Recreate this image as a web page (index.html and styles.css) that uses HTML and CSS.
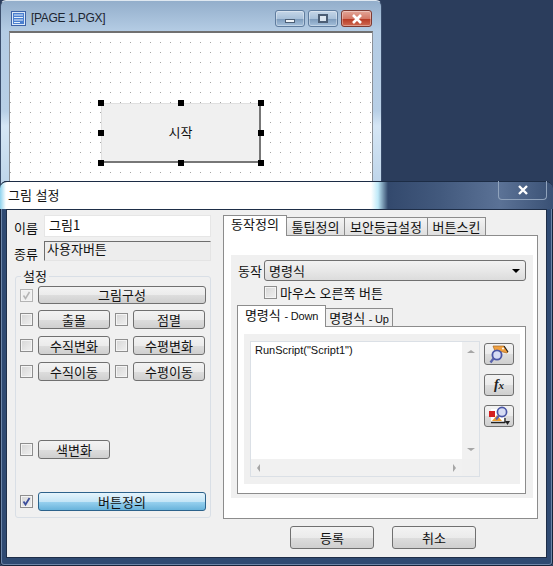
FILE: index.html
```html
<!DOCTYPE html>
<html lang="ko">
<head>
  <meta charset="UTF-8">
  <meta name="viewport" content="width=device-width, initial-scale=1.0">
  <title>그림 설정</title>
  <link rel="stylesheet" href="styles.css">
</head>
<body>

<!-- page window behind the dialog -->
<div class="page-win">
  <div class="page-title">
    <svg class="page-icon" width="15" height="15" viewBox="0 0 15 15">
      <rect x="0.5" y="0.5" width="14" height="14" fill="#dce9f8" stroke="#3c62a8"/>
      <rect x="2" y="2" width="11" height="11" fill="#4a7fd0"/>
      <path d="M3 4h9M3 6.5h9M3 9h9M3 11.5h6" stroke="#e6f0fb" stroke-width="1"/>
    </svg>
    <span class="page-name">[PAGE 1.PGX]</span>
    <div class="win-btns">
      <div class="win-btn"><span class="glyph-min"></span></div>
      <div class="win-btn"><span class="glyph-max"></span></div>
      <div class="win-btn win-close">
        <svg width="14" height="10" viewBox="0 0 14 10"><path d="M3 1l8 8M11 1l-8 8" stroke="#fff" stroke-width="2.6"/></svg>
      </div>
    </div>
  </div>
  <div class="canvas">
    <div class="shape">
      시작
      <i class="handle h-tl"></i><i class="handle h-tc"></i><i class="handle h-tr"></i>
      <i class="handle h-ml"></i><i class="handle h-mr"></i>
      <i class="handle h-bl"></i><i class="handle h-bc"></i><i class="handle h-br"></i>
    </div>
  </div>
</div>

<!-- settings dialog -->
<div class="dialog">
  <div class="dialog-title">
    <span>그림 설정</span>
    <div class="dialog-close">
      <svg width="14" height="10" viewBox="0 0 14 10"><path d="M3 1l8 8M11 1l-8 8" stroke="#fff" stroke-width="2.4"/></svg>
    </div>
  </div>

  <div class="client">
    <div class="left-col">
      <div class="field">
        <label>이름</label>
        <div class="name-input">그림1</div>
      </div>
      <div class="field field-kind">
        <label>종류</label>
        <div class="kind-input">사용자버튼</div>
      </div>

      <fieldset class="group">
        <legend>설정</legend>
        <div class="row row-first">
          <span class="check check-off"><svg width="11" height="11" viewBox="0 0 11 11"><path d="M2.5 5.5l2 3 4-6.5" fill="none" stroke="#b4b4b4" stroke-width="1.5"/></svg></span>
          <button class="btn btn-wide">그림구성</button>
        </div>
        <div class="row">
          <span class="check"></span><button class="btn btn-half">출몰</button>
          <span class="check check-second"></span><button class="btn btn-half">점멸</button>
        </div>
        <div class="row">
          <span class="check"></span><button class="btn btn-half">수직변화</button>
          <span class="check check-second"></span><button class="btn btn-half">수평변화</button>
        </div>
        <div class="row">
          <span class="check"></span><button class="btn btn-half">수직이동</button>
          <span class="check check-second"></span><button class="btn btn-half">수평이동</button>
        </div>
        <div class="row row-color">
          <span class="check"></span><button class="btn btn-half">색변화</button>
        </div>
        <div class="row row-define">
          <span class="check"><svg width="11" height="11" viewBox="0 0 11 11"><path d="M2.5 5.5l2 3 4-6.5" fill="none" stroke="#3d4f9c" stroke-width="1.8"/></svg></span>
          <button class="btn btn-wide btn-blue">버튼정의</button>
        </div>
      </fieldset>
    </div>

    <div class="right-col">
      <div class="tabs">
        <div class="tab tab-on">동작정의</div>
        <div class="tab tab-tooltip">툴팁정의</div>
        <div class="tab tab-security">보안등급설정</div>
        <div class="tab tab-skin">버튼스킨</div>
      </div>
      <div class="tab-panel">
        <div class="action-area">
          <div class="action-row">
            <label>동작</label>
            <div class="combo"><span>명령식</span><i class="combo-arrow"></i></div>
          </div>
          <div class="mouse-row">
            <span class="check"></span>
            <span>마우스 오른쪽 버튼</span>
          </div>
          <div class="subtabs">
            <div class="subtab subtab-on">명령식 <small>- Down</small></div>
            <div class="subtab subtab-up">명령식 <small>- Up</small></div>
          </div>
          <div class="subpanel">
            <div class="script-area">
              <div class="script-box">
                <div class="script-text">RunScript("Script1")</div>
                <div class="vscroll"><i class="arrow-up"></i><i class="arrow-down"></i></div>
                <div class="hscroll"><i class="arrow-left"></i><i class="arrow-right"></i></div>
                <div class="corner"></div>
              </div>
              <div class="tool-col">
                <button class="tool">
                  <svg width="22" height="19" viewBox="0 0 22 19">
                    <path d="M5 1h11l4 6-1 1-4-1-4-1H7z" fill="#f0a040" stroke="#a8651c" stroke-width="0.7"/>
                    <path d="M16 1l4 6" stroke="#222" stroke-width="1.1"/>
                    <circle cx="15" cy="3.5" r="1" fill="#fff"/>
                    <circle cx="9" cy="10" r="4.6" fill="#d6dcf4" stroke="#4a56a6" stroke-width="1.8"/>
                    <path d="M5.5 13.5l-3 4" stroke="#5a64ad" stroke-width="2.4"/>
                  </svg>
                </button>
                <button class="tool tool-fx">f<sub>x</sub></button>
                <button class="tool">
                  <svg width="24" height="20" viewBox="0 0 24 20">
                    <path d="M4 3h13v13H4z" fill="#fff"/>
                    <rect x="2" y="5" width="6" height="6" fill="#d42020"/>
                    <path d="M5 15l5-6 5 6z" fill="#f0a030"/>
                    <path d="M4 16.5h14M18 12v5" stroke="#222" stroke-width="1.3"/>
                    <path d="M18 15h5l-2.5 4z" fill="#222"/>
                    <circle cx="15" cy="6" r="4.6" fill="#d6dcf4" stroke="#4a56a6" stroke-width="1.7"/>
                    <path d="M12 9.5l-3 4" stroke="#5a64ad" stroke-width="2.2"/>
                  </svg>
                </button>
              </div>
            </div>
          </div>
        </div>
      </div>
      <div class="dialog-btns">
        <button class="btn btn-dialog">등록</button>
        <button class="btn btn-dialog">취소</button>
      </div>
    </div>
  </div>
</div>

</body>
</html>
```

FILE: styles.css
```css
* {
  box-sizing: border-box;
}

body {
  margin: 0;
  width: 553px;
  height: 566px;
  overflow: hidden;
  position: relative;
  background: #2b3d5c;
  font-family: "Noto Sans CJK KR", "Liberation Sans", sans-serif;
  font-size: 13px;
  color: #111;
}

label {
  display: block;
}

/* page window */
.page-win {
  position: absolute;
  left: 0;
  top: 0;
  width: 382px;
  height: 190px;
  padding: 0 8px;
  border: 1px solid #3a4d6b;
  border-top-color: #dfe8f1;
  border-radius: 6px 6px 0 0;
  background: linear-gradient(#93aecb, #b4cce4 30px, #b8cfe6 110px, #d5e6f5 125px, #bcd3e9);
}

.page-title {
  height: 30px;
  display: flex;
  align-items: center;
  padding-top: 5px;
}

.page-icon {
  margin-left: 2px;
}

.page-name {
  margin: 0 0 1px 5px;
  font-family: "Liberation Sans", sans-serif;
  font-size: 12px;
  letter-spacing: -0.3px;
  color: #1c2530;
}

.win-btns {
  margin-left: auto;
  margin-right: 1px;
  display: flex;
  gap: 3px;
  align-self: flex-start;
  margin-top: 4px;
}

.win-btn {
  width: 30px;
  height: 17px;
  border: 1px solid #5f7c9e;
  border-radius: 3px;
  background: linear-gradient(#c5d6e8, #a9c1da 50%, #7f9dbd 55%, #a5c0db);
  box-shadow: inset 0 0 0 1px rgba(255, 255, 255, 0.35);
  display: flex;
  align-items: center;
  justify-content: center;
}

.win-close {
  width: 31px;
  border-color: #7d3a32;
  background: linear-gradient(#e3a597, #d47a68 50%, #b83c26 55%, #cf6a52);
}

.glyph-min {
  width: 10px;
  height: 4px;
  margin-top: 5px;
  background: #eef3f8;
  border: 1px solid #4c5e75;
}

.glyph-max {
  width: 10px;
  height: 9px;
  background: #dce6f0;
  border: 2px solid #4c5e75;
}

.canvas {
  height: 160px;
  position: relative;
  border: 1px solid #8a8f96;
  border-top: 2px solid #707070;
  background-color: #fff;
  /* 1px dots on a 10px grid */
  background-image:
    linear-gradient(to right, transparent 1px, #fff 1px),
    linear-gradient(to bottom, #a4a4a4 1px, #fff 1px);
  background-size: 10px 10px;
  background-position: 0 -1px;
}

.shape {
  position: absolute;
  left: 91px;
  top: 70px;
  width: 160px;
  height: 60px;
  padding-bottom: 3px;
  display: flex;
  align-items: center;
  justify-content: center;
  background: #f0f0f0;
  border: 1px solid #e0e0e0;
  border-right: 2px solid #777;
  border-bottom: 2px solid #777;
}

.handle {
  position: absolute;
  width: 6px;
  height: 6px;
  background: #000;
}

.h-tl { left: -4px; top: -4px; }
.h-tc { left: 76px; top: -4px; }
.h-tr { right: -5px; top: -4px; }
.h-ml { left: -4px; top: 26px; }
.h-mr { right: -5px; top: 26px; }
.h-bl { left: -4px; bottom: -5px; }
.h-bc { left: 76px; bottom: -5px; }
.h-br { right: -5px; bottom: -5px; }

/* dialog */
.dialog {
  position: absolute;
  left: 0;
  top: 181px;
  width: 553px;
  height: 385px;
  padding: 0 6px 7px 6px;
  border-radius: 7px 7px 4px 4px;
  background: #2f4a72;
  box-shadow: inset 0 0 0 1px #16233a, inset 0 0 0 2px #6d86a8;
}

.dialog-title {
  height: 28px;
  margin: 0 -6px;
  padding: 3px 0 0 8px;
  display: flex;
  justify-content: space-between;
  align-items: flex-start;
  border-radius: 7px 7px 0 0;
  border-top: 1px solid #1c2c45;
  background: linear-gradient(to right, #8fd3ee, #fff 6px, #fff 371px, #bfe9f8 378px, #33496d 388px, #42597d 440px, #5b7296 500px, #3a5175 553px);
}

.dialog-close {
  width: 49px;
  height: 19px;
  margin: -4px 6px 0 0;
  display: flex;
  align-items: center;
  justify-content: center;
  border: 1px solid #90a3bc;
  border-top: 0;
  border-radius: 0 0 4px 4px;
}

.client {
  height: 349px;
  display: flex;
  padding: 5px 0 0 7px;
  background: #f0f0f0;
  border: 1px solid #1e2e48;
}

.left-col {
  width: 197px;
  margin-right: 12px;
}

.field {
  height: 22px;
  display: flex;
  align-items: center;
}

.field label {
  width: 30px;
  padding-top: 2px;
}

.field-kind {
  height: 20px;
  margin-top: 4px;
}

.field-kind label {
  padding-top: 4px;
}

.name-input {
  width: 167px;
  height: 22px;
  padding: 0 4px;
  background: #fff;
  border: 1px solid #e6e6e6;
  line-height: 17px;
}

.kind-input {
  width: 167px;
  height: 20px;
  padding: 0 2px;
  line-height: 14px;
  background: #ededed;
  border: 1px solid #e4e4e4;
  border-top: 1px solid #6e6e6e;
  border-left: 1px solid #6e6e6e;
}

.group {
  height: 249px;
  width: 196px;
  margin: 8px 0 0 1px;
  padding: 3px 0 0 4px;
  min-width: 0;
  border: 1px solid #d9dfe6;
  border-radius: 3px;
}

.group legend {
  margin-left: 1px;
  padding: 0 2px;
  line-height: 14px;
  height: 14px;
}

.row {
  height: 19px;
  margin-top: 7px;
  display: flex;
  align-items: center;
}

.row-first {
  height: 18px;
  margin-top: 0;
}

.row-first + .row {
  margin-top: 6px;
}

.row-color {
  margin-top: 59px;
}

.row-define {
  margin-top: 33px;
}

.check {
  flex: none;
  width: 13px;
  height: 13px;
  display: flex;
  align-items: center;
  justify-content: center;
  border: 1px solid #8e8e8e;
  background: linear-gradient(135deg, #d6d6d6, #f0f0f0);
  box-shadow: inset 0 0 0 1px #f4f4f4;
}

.check-off {
  border-color: #b4b4b4;
  background: #efefef;
}

.check-second {
  margin-left: 5px;
}

.btn {
  height: 100%;
  margin: 0 0 0 5px;
  padding: 0;
  font: inherit;
  color: #111;
  line-height: 14px;
  border: 1px solid #707070;
  border-radius: 3px;
  background: linear-gradient(#f3f3f3, #ebebeb 50%, #dddddd 52%, #cfcfcf);
}

.btn-wide {
  width: 168px;
}

.btn-half {
  width: 72px;
}

.btn-blue {
  border-color: #2c628b;
  background: linear-gradient(#e5f4fc, #c4e5f6 50%, #98d1ef 52%, #68b3db);
}

.right-col {
  width: 315px;
}

.tabs {
  display: flex;
  align-items: flex-end;
  height: 20px;
  position: relative;
}

.tab {
  height: 18px;
  text-align: center;
  line-height: 17px;
  background: linear-gradient(#f4f4f4, #dfdfdf);
  border: 1px solid #8c8c8c;
  border-bottom: 0;
  border-left: 0;
}

.tab-on {
  width: 64px;
  height: 21px;
  margin-bottom: -1px;
  position: relative;
  z-index: 1;
  background: #fff;
  border-left: 1px solid #8c8c8c;
  line-height: 16px;
}

.tab-tooltip { width: 58px; }
.tab-security { width: 83px; }
.tab-skin { width: 58px; }

.tab-panel {
  height: 284px;
  padding: 19px 4px 0 7px;
  background: #fff;
  border: 1px solid #8c8c8c;
}

.action-area {
  height: 243px;
  padding: 5px 7px 0 6px;
  background: #f0f0f0;
}

.action-row {
  display: flex;
  align-items: center;
}

.action-row label {
  width: 27px;
  padding-left: 1px;
}

.combo {
  width: 262px;
  height: 21px;
  padding: 0 4px;
  display: flex;
  align-items: center;
  justify-content: space-between;
  border: 1px solid #707070;
  border-radius: 3px;
  background: linear-gradient(#f2f2f2, #e8e8e8 50%, #dcdcdc);
}

.combo-arrow {
  width: 0;
  height: 0;
  margin-right: 1px;
  border-left: 4px solid transparent;
  border-right: 4px solid transparent;
  border-top: 4px solid #000;
}

.mouse-row {
  margin: 5px 0 0 27px;
  height: 13px;
  display: flex;
  align-items: center;
  gap: 3px;
}

.subtabs {
  height: 21px;
  margin-top: 6px;
  display: flex;
  align-items: flex-end;
  position: relative;
}

.subtab {
  height: 18px;
  line-height: 17px;
  text-align: center;
  background: #f0f0f0;
  border: 1px solid #8c8c8c;
  border-bottom: 0;
}

.subtab small {
  font-family: "Liberation Sans", sans-serif;
  font-size: 11px;
  letter-spacing: -0.2px;
}

.subtab-on {
  width: 89px;
  height: 22px;
  margin-bottom: -1px;
  position: relative;
  z-index: 1;
  background: #fff;
  line-height: 17px;
}

.subtab-up {
  width: 67px;
  border-left: 0;
}

.subpanel {
  width: 289px;
  height: 168px;
  padding: 7px 5px 0 6px;
  background: #fff;
  border: 1px solid #8c8c8c;
}

.script-area {
  height: 150px;
  padding: 7px 6px;
  display: flex;
  background: #f0f0f0;
}

.script-box {
  width: 230px;
  height: 136px;
  display: grid;
  grid-template-columns: 1fr 17px;
  grid-template-rows: 1fr 17px;
  background: #fff;
  border: 1px solid #dbe0e6;
}

.script-text {
  padding: 1px 4px;
  font-family: "Liberation Sans", sans-serif;
  font-size: 11px;
  line-height: 15px;
}

.vscroll {
  background: #f1f1f1;
  display: flex;
  flex-direction: column;
  justify-content: space-between;
  align-items: center;
  padding: 8px 0;
}

.hscroll {
  background: #f1f1f1;
  display: flex;
  justify-content: space-between;
  align-items: center;
  padding: 0 6px;
}

.corner {
  background: #f0f0f0;
}

.arrow-up,
.arrow-down,
.arrow-left,
.arrow-right {
  width: 0;
  height: 0;
  border: 3px solid transparent;
}

.arrow-up { border-top: 0; border-left-width: 4px; border-right-width: 4px; border-bottom-color: #a6a6a6; }
.arrow-down { border-bottom: 0; border-left-width: 4px; border-right-width: 4px; border-top-color: #a6a6a6; }
.arrow-left { border-left: 0; border-top-width: 4px; border-bottom-width: 4px; border-right-color: #a6a6a6; }
.arrow-right { border-right: 0; border-top-width: 4px; border-bottom-width: 4px; border-left-color: #a6a6a6; }

.tool-col {
  margin: 2px 0 0 4px;
  display: flex;
  flex-direction: column;
  gap: 9px;
}

.tool {
  width: 30px;
  height: 22px;
  padding: 0;
  display: flex;
  align-items: center;
  justify-content: center;
  border: 1px solid #707070;
  border-radius: 3px;
  background: linear-gradient(#f3f3f3, #ebebeb 50%, #dddddd 52%, #cfcfcf);
}

.tool-fx {
  font-family: "Liberation Serif", serif;
  font-style: italic;
  font-weight: bold;
  font-size: 14px;
  color: #222;
}

.tool-fx sub {
  font-size: 11px;
  line-height: 0;
  vertical-align: -1px;
}

.dialog-btns {
  margin: 7px 0 0 67px;
  display: flex;
  gap: 18px;
}

.btn-dialog {
  width: 84px;
  height: 23px;
  margin: 0;
}
```
